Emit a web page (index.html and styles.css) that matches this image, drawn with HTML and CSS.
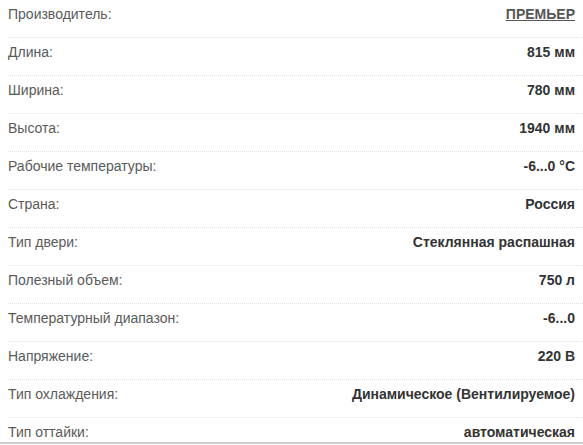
FILE: index.html
```html
<!DOCTYPE html>
<html lang="ru">
<head>
<meta charset="utf-8">
<link rel="stylesheet" href="styles.css">
</head>
<body>
<div class="frame">
  <ul class="specs">
    <li class="row"><span class="name">Производитель:</span><a class="val link" href="#">ПРЕМЬЕР</a></li>
    <li class="row"><span class="name">Длина:</span><span class="val">815 мм</span></li>
    <li class="row"><span class="name">Ширина:</span><span class="val">780 мм</span></li>
    <li class="row"><span class="name">Высота:</span><span class="val">1940 мм</span></li>
    <li class="row"><span class="name">Рабочие температуры:</span><span class="val">-6...0 °C</span></li>
    <li class="row"><span class="name">Страна:</span><span class="val">Россия</span></li>
    <li class="row"><span class="name">Тип двери:</span><span class="val">Стеклянная распашная</span></li>
    <li class="row"><span class="name">Полезный объем:</span><span class="val">750 л</span></li>
    <li class="row"><span class="name">Температурный диапазон:</span><span class="val">-6...0</span></li>
    <li class="row"><span class="name">Напряжение:</span><span class="val">220 В</span></li>
    <li class="row"><span class="name">Тип охлаждения:</span><span class="val">Динамическое (Вентилируемое)</span></li>
    <li class="row"><span class="name">Тип оттайки:</span><span class="val">автоматическая</span></li>
  </ul>
</div>
</body>
</html>
```
FILE: styles.css
```css
html, body {
  margin: 0;
  padding: 0;
  background: #fff;
}
body {
  font-family: "Liberation Sans", Arial, sans-serif;
  font-size: 14px;
  color: #555;
}
.frame {
  height: 442px;
  overflow: hidden;
  border-bottom: 2px solid #cfcfcf;
}
.specs {
  list-style: none;
  margin: 0;
  padding: 0 0 0 8px;
}
.row {
  display: flex;
  justify-content: space-between;
  align-items: baseline;
  height: 37px;
  box-sizing: content-box;
  padding: 0 8px 0 0;
  border-bottom: 1px dotted #e2e2e2;
  line-height: 16px;
}
.row .name,
.row .val {
  padding-top: 6px;
}
.name {
  color: #5a5a5a;
}
.val {
  font-weight: bold;
  color: #333;
}
.link {
  color: #555;
  text-decoration: underline;
}
```
